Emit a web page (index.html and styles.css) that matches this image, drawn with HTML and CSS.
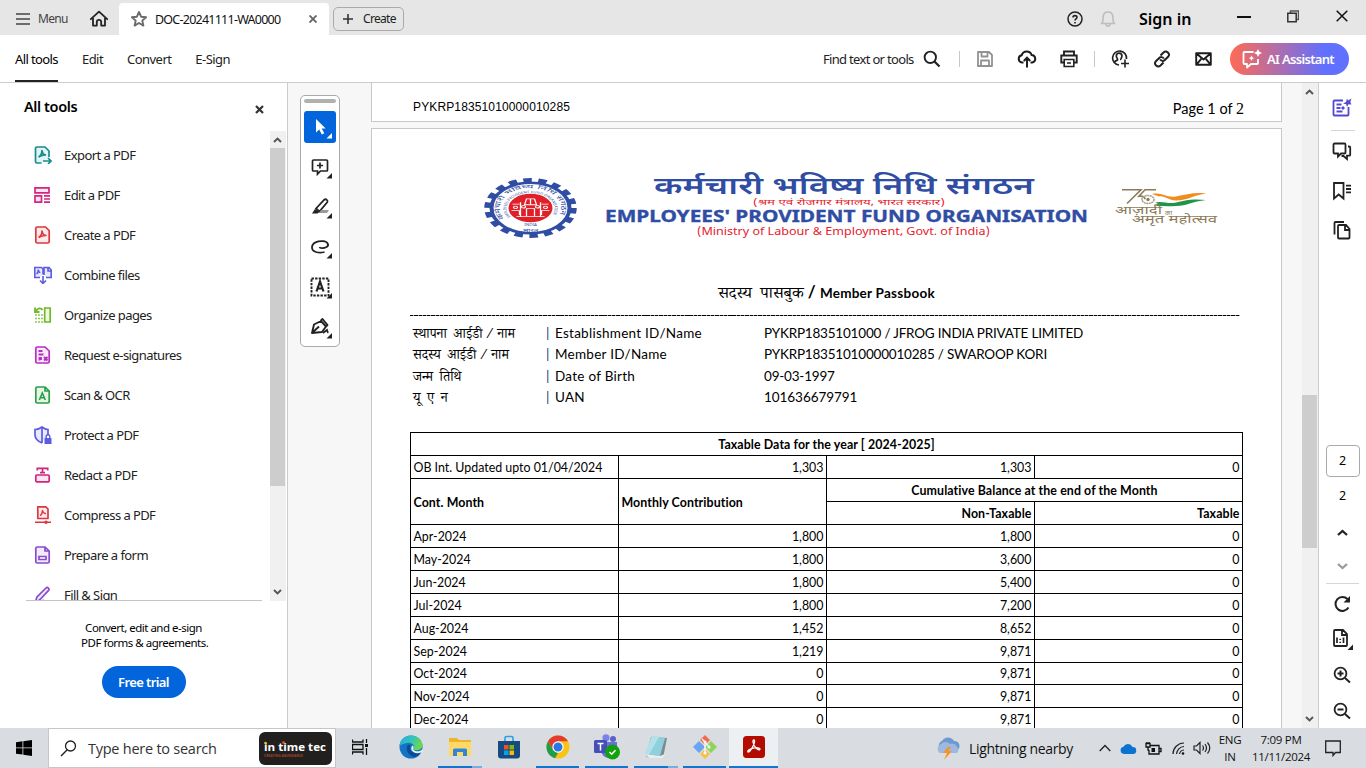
FILE: index.html
```html
<!DOCTYPE html>
<html lang="en">
<head>
<meta charset="utf-8">
<title>DOC-20241111-WA0000</title>
<link rel="stylesheet" href="styles.css">
</head>
<body>
<div class="app">
  <header class="titlebar">
    <div class="menu"><svg class="ic" width="14" height="12" viewBox="0 0 14 12"><path d="M0 1h14M0 6h14M0 11h14" stroke="#444" stroke-width="1.7"/></svg><span>Menu</span></div>
    <svg class="home ic" width="20" height="18" viewBox="0 0 20 18"><path d="M1.8 9.2 10 1.6l8.200 7.600M4 8v7.600h3.800v-3.600a2.200 2.200 0 0 1 4.400 0v3.600H16V8" stroke="#222" stroke-width="1.8" stroke-linejoin="round" stroke-linecap="round"/></svg>
    <div class="tab">
      <svg class="ic" width="18" height="18" viewBox="0 0 18 18"><path d="m9 2 2.100 4.700 5 .5-3.800 3.400 1.100 5L9 13l-4.400 2.600 1.100-5L1.900 7.200l5-.5z" stroke="#6a6a6a" stroke-width="1.900" stroke-linejoin="round"/></svg>
      <span class="tab-name">DOC-20241111-WA0000</span>
      <svg class="ic tab-x" width="8" height="8" viewBox="0 0 8 8"><path d="m.5.5 7 7m0-7-7 7" stroke="#666" stroke-width="1.900"/></svg>
    </div>
    <div class="create"><svg class="ic" width="10" height="10" viewBox="0 0 10 10"><path d="M5 0v10M0 5h10" stroke="#333" stroke-width="1.600"/></svg><span>Create</span></div>
    <div class="window-tools">
      <svg class="ic" width="16" height="16" viewBox="0 0 16 16"><circle cx="8" cy="8" r="7" stroke="#222" stroke-width="1.500"/><path d="M6 6.500c0-2.600 4-2.400 4-.2 0 1.500-2 1.600-2 3.200M8 11v1.400" stroke="#222" stroke-width="1.600"/></svg>
      <svg class="ic bell" width="16" height="18" viewBox="0 0 16 18"><path d="M1.500 13.500C3.500 11.500 3 9 3.200 6.500 3.500 3.500 5.400 2 8 2s4.500 1.500 4.800 4.500c.2 2.500-.3 5 1.700 7zM6 14c.3 3 3.700 3 4 0" stroke="#bdbdbd" stroke-width="1.600" stroke-linejoin="round"/></svg>
      <span class="sign">Sign in</span>
      <svg class="ic min" width="14" height="2" viewBox="0 0 14 2"><path d="M0 1h14" stroke="#111" stroke-width="2"/></svg>
      <svg class="ic max" width="12" height="13" viewBox="0 0 12 13"><path d="M3.500 3V1h8v8.500H9.500" stroke="#555" stroke-width="1.500"/><path d="M.8 3.300h8.400v8.400H.8z" stroke="#333" stroke-width="1.500"/></svg>
      <svg class="ic close" width="12" height="12" viewBox="0 0 12 12"><path d="m.7.7 10.600 10.600m0-10.600L.7 11.300" stroke="#111" stroke-width="1.500"/></svg>
    </div>
  </header>

  <nav class="toolbar">
    <span class="nav-item active">All tools</span><span class="nav-item">Edit</span><span class="nav-item convert">Convert</span><span class="nav-item esign">E-Sign</span>
    <div class="actions">
      <span class="find">Find text or tools</span>
      <svg class="ic search" width="18" height="18" viewBox="0 0 18 18"><circle cx="7.300" cy="7.300" r="5.700" stroke="#222" stroke-width="1.900"/><path d="m11.500 11.500 5 5" stroke="#222" stroke-width="2.200"/></svg>
      <i class="sep s1"></i>
      <svg class="ic save" width="16" height="16" viewBox="0 0 16 16"><path d="M1 1h11l3 3v11H1zM4.500 1.500v4h6v-4M4 15V9.500h8V15" stroke="#929292" stroke-width="1.800" stroke-linejoin="round"/></svg>
      <svg class="ic cloud" width="20" height="18" viewBox="0 0 20 18"><path d="M6.500 12.500H5A3.700 3.700 0 0 1 4.700 5.200 5.200 5.200 0 0 1 14.600 5a3.800 3.800 0 0 1 .7 7.500h-1.800M10 17.500V8m-3.200 3L10 7.700l3.200 3.300" stroke="#1d1d1d" stroke-width="2"/></svg>
      <svg class="ic print" width="18" height="18" viewBox="0 0 18 18"><path d="M4 5V1.500h10V5M4 12.500H1.300V5.500h15.400v7H14" stroke="#222" stroke-width="1.900"/><path d="M4.200 9.500h9.600v7H4.200zM7 13h4" stroke="#222" stroke-width="1.600"/></svg>
      <i class="sep s2"></i>
      <svg class="ic user" width="19" height="19" viewBox="0 0 19 19"><path d="M8 16a7 7 0 1 1 7.500-6M3.500 13.500c.5-2 2.300-2 3-2.500.8-.8-1.200-2-1.200-4 0-1.800 1.200-2.800 2.700-2.800S10.900 5.200 10.900 7c0 2-1.700 3.200-1 4" stroke="#222" stroke-width="1.700"/><path d="M14 10.500v8M10 14.500h8" stroke="#222" stroke-width="1.600"/></svg>
      <svg class="ic link" width="18" height="18" viewBox="0 0 18 18"><path d="m7.500 5.500 3-3c3-2.700 7.200 1.300 4.600 4.300l-3.300 3.200c-1.600 1.500-3.800 1-4.600-.6M10.500 12.500l-3 3c-3 2.700-7.200-1.300-4.600-4.300l3.300-3.200c1.600-1.500 3.800-1 4.600.6" stroke="#222" stroke-width="2"/></svg>
      <svg class="ic mail" width="17" height="14" viewBox="0 0 17 14"><path d="M1.200 1.200h14.600v11.600H1.200zl7.300 6.300 7.300-6.300M1.200 12.800l5-6m9.600 6-5-6" stroke="#1d1d1d" stroke-width="1.900" stroke-linejoin="round"/></svg>
      <div class="ai"><svg class="ic" width="20" height="20" viewBox="0 0 20 20"><path d="M11.500 3H2.500a1 1 0 0 0-1 1v10a1 1 0 0 0 1 1H5v3.500L9 15h6a1 1 0 0 0 1-1v-4" stroke="#fff" stroke-width="1.800" stroke-linejoin="round"/><path d="m16 0 1.200 2.600L20 4l-2.600 1.200L16 8l-1.300-2.800L12 4l2.700-1.400zM9.500 6.500l.9 1.800 1.800.9-1.800.9-.9 1.800-.9-1.800-1.800-.9 1.800-.9z" fill="#fff"/></svg><span>AI Assistant</span></div>
    </div>
  </nav>

  <main class="workspace">
    <aside class="sidebar">
      <div class="side-head"><h2>All tools</h2><svg class="ic" width="9" height="9" viewBox="0 0 9 9"><path d="m1 1 7 7m0-7L1 8" stroke="#333" stroke-width="2.200"/></svg></div>
      <div class="side-body">
        <ul class="tools">
          <li><svg class="ic" width="18" height="18" viewBox="0 0 18 18"><path d="M7.500 17H3a1.500 1.500 0 0 1-1.500-1.500v-13A1.500 1.500 0 0 1 3 1h8l4 4v6" fill="#e2f3f3" stroke="#1a8a8d" stroke-width="1.700"/><path d="M4.500 11c2-1 3.500-3.500 3.500-7 .3 3.500 2 5 4 5-2.500-.2-5 .5-7.500 2M9 15h7.500m-2.500-3 3 3-3 3" stroke="#1a8a8d" stroke-width="1.700"/></svg><span>Export a PDF</span></li>
          <li><svg class="ic" width="18" height="18" viewBox="0 0 18 18"><path d="M1 1.800h14v5H1zM1 9.800h6.500v6.400H1z" fill="#fde6f2" stroke="#d4257f" stroke-width="1.700"/><path d="M10 9.800h6M10 13h6M10 16.200h6" stroke="#d4257f" stroke-width="1.700"/></svg><span>Edit a PDF</span></li>
          <li><svg class="ic" width="18" height="18" viewBox="0 0 18 18"><path d="M11.500 1H3.300A1.500 1.500 0 0 0 1.800 2.500v13A1.500 1.500 0 0 0 3.300 17h10.400a1.500 1.500 0 0 0 1.500-1.500v-11z" fill="#fde9e9" stroke="#dc3740" stroke-width="1.700"/><path d="M4.500 11.500C6.500 10.500 8 8 8 4.500c.3 3.500 2 5 4.500 5-2.500-.2-5.500.5-8 2" stroke="#dc3740" stroke-width="1.600"/></svg><span>Create a PDF</span></li>
          <li><svg class="ic" width="18" height="18" viewBox="0 0 18 18"><path d="M6 11.500H.8v-10h6.700L9 3v5.500M10 9V1.500h5L17.200 4v7.500H12M14 1.500V5h3" fill="#e9e9fd" stroke="#5c5ce0" stroke-width="1.600"/><path d="M2.500 8C4 7 4.300 5 4.300 3.500c.2 2 .8 3 2 3M9 10v7.500m-3-3 3 3 3-3" stroke="#5c5ce0" stroke-width="1.600"/></svg><span>Combine files</span></li>
          <li><svg class="ic" width="18" height="18" viewBox="0 0 18 18"><path d="M10.700 2h5.500v14h-5.500z" fill="#effbe2" stroke="#72b829" stroke-width="1.700"/><path d="M2 5c1.500-3 5-3.500 6.500-1M1 1.500V6h4.500" stroke="#72b829" stroke-width="1.800"/><path d="M1 9h8M1 12.500h8M1 16h8" stroke="#8aca50" stroke-width="1.600" stroke-dasharray="2 1"/></svg><span>Organize pages</span></li>
          <li><svg class="ic" width="18" height="18" viewBox="0 0 18 18"><path d="M11 1H3.300A1.500 1.500 0 0 0 1.800 2.500v13A1.500 1.500 0 0 0 3.300 17h10.400a1.500 1.500 0 0 0 1.500-1.500V5z" fill="#fae8fb" stroke="#b72fc0" stroke-width="1.700"/><path d="M4.500 5h4M4.500 8.500h5M5.500 11v3.500m1.500-3.500v3M10 11l3.500 3.500m0-3.500L10 14.500" stroke="#b72fc0" stroke-width="1.800"/></svg><span>Request e-signatures</span></li>
          <li><svg class="ic" width="18" height="18" viewBox="0 0 18 18"><path d="M11 1H3.300A1.500 1.500 0 0 0 1.800 2.500v13A1.500 1.500 0 0 0 3.300 17h10.400a1.500 1.500 0 0 0 1.500-1.500V5zv4h4" fill="#e5f6e9" stroke="#2c9e45" stroke-width="1.700"/><path d="m5.300 14 3-7 3 7M6.300 11.800h4" stroke="#2c9e45" stroke-width="1.600"/></svg><span>Scan &amp; OCR</span></li>
          <li><svg class="ic" width="18" height="18" viewBox="0 0 18 18"><path d="M8 17C3.500 15 1 12.500 1 9V3.500C4 3.500 6 2.500 8 1c2 1.500 4 2.500 6 2.500V9" fill="#e9e9fd" stroke="#5c5ce0" stroke-width="1.700"/><path d="M8 1v16" stroke="#5c5ce0" stroke-width="1.700"/><path d="M10.500 12h7v6h-7z" fill="#5c5ce0"/><path d="M12.200 12.500v-2a1.800 1.800 0 0 1 3.600 0v2" stroke="#5c5ce0" stroke-width="1.400"/></svg><span>Protect a PDF</span></li>
          <li><svg class="ic" width="18" height="18" viewBox="0 0 18 18"><path d="M3.300 4.500V2.300h10.400v2.200M8.500 2v5M6 6.700h5" stroke="#d0247e" stroke-width="1.700"/><rect x="1.800" y="9" width="13.400" height="6.800" rx="1" fill="#fde6f2" stroke="#d0247e" stroke-width="1.700"/></svg><span>Redact a PDF</span></li>
          <li><svg class="ic" width="18" height="18" viewBox="0 0 18 18"><path d="M3.800.8h8L14 3v9.500H3.800z" fill="#fde9e9" stroke="#dc3740" stroke-width="1.700" stroke-linejoin="round"/><path d="M6 9.500C8 8.500 8.500 6 8.500 4c.3 2.500 1.500 3.500 3.500 3.500M1 16.300h16" stroke="#dc3740" stroke-width="1.500"/><circle cx="12" cy="16.300" r="1.700" fill="#dc3740"/></svg><span>Compress a PDF</span></li>
          <li><svg class="ic" width="18" height="18" viewBox="0 0 18 18"><path d="M11 1H3.300A1.500 1.500 0 0 0 1.800 2.500v13A1.500 1.500 0 0 0 3.300 17h10.400a1.500 1.500 0 0 0 1.500-1.500V5zv4h4M5 10.500h7v3H5z" fill="#f2eafc" stroke="#864ccc" stroke-width="1.700"/></svg><span>Prepare a form</span></li>
          <li><svg class="ic" width="18" height="18" viewBox="0 0 18 18"><path d="M1 17 3 11 12 2c1.500-1.500 4 .8 2.600 2.400L6 13.500 1 17zM7 17c2-4 3-3 3 0" fill="#f2eafc" stroke="#864ccc" stroke-width="1.700"/></svg><span>Fill &amp; Sign</span></li>
        </ul>
        <div class="scroll side-scroll"><svg class="ic" width="9" height="6" viewBox="0 0 9 6"><path d="m1 5 3.500-3.500L8 5" stroke="#555" stroke-width="1.900"/></svg><i class="thumb"></i><svg class="ic down" width="9" height="6" viewBox="0 0 9 6"><path d="m1 1 3.500 3.500L8 1" stroke="#555" stroke-width="1.900"/></svg></div>
      </div>
      <div class="promo"><p>Convert, edit and e-sign<br>&nbsp;PDF forms &amp; agreements.</p><button>Free trial</button></div>
    </aside>

    <section class="canvas">
      <div class="palette">
        <i class="grip"></i>
        <div class="pbtn on"><svg class="ic" width="32" height="32" viewBox="0 0 32 32"><path d="M12 8v13.500l3.200-3 2.600 5 2.500-1.200-2.600-4.800h4z" fill="#fff"/><path d="M28 22v5.500h-5.500z" fill="#fff"/></svg></div>
        <div class="pbtn"><svg class="ic" width="32" height="32" viewBox="0 0 32 32"><path d="M9.500 9h13a1 1 0 0 1 1 1v9a1 1 0 0 1-1 1h-6l-3 3.200V20h-4a1 1 0 0 1-1-1v-9a1 1 0 0 1 1-1zM16 11.500v6M13 14.500h6" stroke="#222" stroke-width="1.700"/><path d="M28 22v5.500h-5.500z" fill="#222"/></svg></div>
        <div class="pbtn"><svg class="ic" width="32" height="32" viewBox="0 0 32 32"><path d="m12 17.500 8.300-8.800c1.500-1.300 4.200.9 2.900 2.600L15.500 20.500z" stroke="#222" stroke-width="1.800"/><path d="m11 18 4.500 3-2 1.500H8z" fill="#222"/><path d="M17 19h8l-2 3h-8z" fill="#999"/><path d="M28 22v5.500h-5.500z" fill="#222"/></svg></div>
        <div class="pbtn"><svg class="ic" width="32" height="32" viewBox="0 0 32 32"><path d="M20.500 21c-6 1.500-12.500 0-12.500-4.500C8 11.500 14 9.800 19 10.200c5 .4 6.500 4 3.500 5.800-2.500 1.300-6.500 1.800-7 0" stroke="#222" stroke-width="1.800"/><path d="M28 22v5.500h-5.500z" fill="#222"/></svg></div>
        <div class="pbtn"><svg class="ic" width="32" height="32" viewBox="0 0 32 32"><path d="M7.500 7.500h17v17h-17z" stroke="#222" stroke-width="1.900" stroke-dasharray="2.400 1.200"/><path d="m12.500 20.500 3.500-10 3.500 10m-6-3h5" stroke="#222" stroke-width="2.200"/><path d="M28 22v5.500h-5.500z" fill="#222"/></svg></div>
        <div class="pbtn"><svg class="ic" width="32" height="32" viewBox="0 0 32 32"><path d="m8 22 2-8.500 7-3.500 5 5.500-4 5.500zM16.500 10l2-2 5 6-2 2M8.500 21.500l6.500-6" stroke="#222" stroke-width="1.900" stroke-linejoin="round"/><path d="m19 22 4-3 1 3" stroke="#222" stroke-width="1.700"/><path d="M28 22v5.500h-5.500z" fill="#222"/></svg></div>
      </div>

      <div class="pages">
        <div class="page page-prev"><span class="doc-id">PYKRP18351010000010285</span><span class="page-no">Page 1 of <b>2</b></span></div>
        <div class="page page-main">
          <svg class="banner" width="832" height="72" viewBox="410 169 832 72">
            <g transform="translate(530.500 208) scale(1 .647)">
              <circle r="42.500" fill="none" stroke="#2f4da3" stroke-width="7.500" stroke-dasharray="8.400 6.434"/>
              <circle r="39" fill="none" stroke="#2f4da3" stroke-width="4"/>
              <path id="ring-top" d="M-26 16A30.500 30.500 0 1 1 26 16" fill="none"/>
              <path id="ring-mid" d="M-20 14A24 24 0 1 1 20 14" fill="none"/>
              <text class="ring-hi"><textPath href="#ring-top" textLength="122" lengthAdjust="spacingAndGlyphs">कर्मचारी भविष्य निधि संगठन</textPath></text>
              <text class="ring-en"><textPath href="#ring-mid" textLength="98" lengthAdjust="spacingAndGlyphs">EMPLOYEES PROVIDENT FUND ORGANISATION</textPath></text>
              <circle r="22" fill="#e02028"/>
              <g fill="none" stroke="#fff" stroke-width="1.300"><path d="M-18 -6h7M18 -6h-7M-19 4h8v7M19 4h-8v7M-10 -9V14M10 -9V14M-4 13V1h8v12M-14 13h28M-4 -14h8l2 9h-12zM0 -14v9"/><circle cx="-7" cy="-2" r="2"/><circle cx="7" cy="-2" r="2"/><circle cx="-15" cy="-1" r="2"/><circle cx="15" cy="-1" r="2"/></g>
              <text class="ring-hi" x="0" y="36.500" text-anchor="middle">भारत</text>
              <text class="ring-en" x="0" y="28" text-anchor="middle">INDIA</text>
            </g>
            <text class="title-hi" x="654" y="194" textLength="380" lengthAdjust="spacingAndGlyphs">कर्मचारी भविष्य निधि संगठन</text>
            <text class="sub-hi" x="753" y="205" textLength="192" lengthAdjust="spacingAndGlyphs">(श्रम एवं रोजगार मंत्रालय, भारत सरकार)</text>
            <text class="title-en" x="605" y="222" textLength="483" lengthAdjust="spacingAndGlyphs">EMPLOYEES' PROVIDENT FUND ORGANISATION</text>
            <text class="sub-en" x="697" y="235" textLength="293" lengthAdjust="spacingAndGlyphs">(Ministry of Labour &amp; Employment, Govt. of India)</text>
            <path d="M1122 189.700h19l-14 13.800M1156 189.700h-11l-6 6.500c4-.5 6 1 6 3" fill="none" stroke="#8b7b58" stroke-width="1.600"/>
            <ellipse cx="1148" cy="199.500" rx="6" ry="4" fill="none" stroke="#aaa08a" stroke-width="1.600" stroke-dasharray="2 .5"/><circle cx="1148" cy="199.500" r="1.700" fill="#8b7b58"/>
            <path d="M1152 194c10-2 14 4 24 2.500s18-4.500 30-3c-12 1.500-18 7-30 7-8 0-11-5-17-4z" fill="#f28c1e"/>
            <path d="M1155 202.500c8-2 13 2 21 0s16-4 30-2.500c-14 1.500-19 6-30 6-8 .5-14 0-21 0 3-1 4-2 0-3.500z" fill="#1f9547"/>
            <text class="amrit" x="1115" y="214" textLength="47" lengthAdjust="spacingAndGlyphs">आज़ादी</text><text class="amrit small" x="1165" y="214.500">का</text>
            <text class="amrit" x="1132" y="223" textLength="85" lengthAdjust="spacingAndGlyphs">अमृत महोत्सव</text>
          </svg>
          <h1 class="passbook"><span class="hi">सदस्य पासबुक</span><span class="slash">/</span><span>Member Passbook</span></h1>
          <div class="rule"></div>
          <dl class="info">
            <dt class="hi">स्थापना आईडी ⁄ नाम</dt><dd class="bar">|</dd><dd class="label">Establishment ID/Name</dd><dd class="val">PYKRP1835101000 / JFROG INDIA PRIVATE LIMITED</dd>
            <dt class="hi">सदस्य आईडी ⁄ नाम</dt><dd class="bar">|</dd><dd class="label">Member ID/Name</dd><dd class="val">PYKRP18351010000010285 / SWAROOP KORI</dd>
            <dt class="hi">जन्म तिथि</dt><dd class="bar">|</dd><dd class="label">Date of Birth</dd><dd class="val">09-03-1997</dd>
            <dt class="hi">यू ए न</dt><dd class="bar">|</dd><dd class="label">UAN</dd><dd class="val">101636679791</dd>
          </dl>
          <table class="ledger">
            <colgroup><col><col><col><col></colgroup>
            <tr><th colspan="4" class="c">Taxable Data for the year [ 2024-2025]</th></tr>
            <tr><td>OB Int. Updated upto 01/04/2024</td><td>1,303</td><td>1,303</td><td>0</td></tr>
            <tr><th rowspan="2" class="tall">Cont. Month</th><th rowspan="2" class="tall">Monthly Contribution</th><th colspan="2" class="c">Cumulative Balance at the end of the Month</th></tr>
            <tr><th class="r">Non-Taxable</th><th class="r">Taxable</th></tr>
            <tr><td>Apr-2024</td><td>1,800</td><td>1,800</td><td>0</td></tr>
            <tr><td>May-2024</td><td>1,800</td><td>3,600</td><td>0</td></tr>
            <tr><td>Jun-2024</td><td>1,800</td><td>5,400</td><td>0</td></tr>
            <tr><td>Jul-2024</td><td>1,800</td><td>7,200</td><td>0</td></tr>
            <tr><td>Aug-2024</td><td>1,452</td><td>8,652</td><td>0</td></tr>
            <tr><td>Sep-2024</td><td>1,219</td><td>9,871</td><td>0</td></tr>
            <tr class="short"><td>Oct-2024</td><td>0</td><td>9,871</td><td>0</td></tr>
            <tr><td>Nov-2024</td><td>0</td><td>9,871</td><td>0</td></tr>
            <tr><td>Dec-2024</td><td>0</td><td>9,871</td><td>0</td></tr>
            <tr><td></td><td></td><td></td><td></td></tr>
          </table>
        </div>
      </div>
      <div class="scroll doc-scroll"><svg class="ic" width="9" height="6" viewBox="0 0 9 6"><path d="m1 5 3.500-3.500L8 5" stroke="#555" stroke-width="1.900"/></svg><i class="thumb"></i><svg class="ic down" width="9" height="6" viewBox="0 0 9 6"><path d="m1 1 3.500 3.500L8 1" stroke="#555" stroke-width="1.900"/></svg></div>
    </section>

    <aside class="rail">
      <svg class="ic" width="20" height="20" viewBox="0 0 20 20"><path d="M11 2.500H2.500a1 1 0 0 0-1 1v13a1 1 0 0 0 1 1h13a1 1 0 0 0 1-1V9M4.500 6.500h5M4.500 10h4M4.500 13.500h6" stroke="#5548d0" stroke-width="1.800"/><path d="m15 .5 1 2 3.500-2-1.200 3.500 1.200 2.500-3-.3L15 9l-.8-2.800-3.200-.7L14 4zM11 8l2 2-2 2-2-2z" fill="#5548d0"/></svg>
      <i class="rail-line first"></i>
      <svg class="ic r2" width="20" height="20" viewBox="0 0 20 20"><path d="M2.500 2.500h10a1 1 0 0 1 1 1v8a1 1 0 0 1-1 1H9L6 15.500v-3H2.500a1 1 0 0 1-1-1v-8a1 1 0 0 1 1-1zM16 5.500h1.200a1 1 0 0 1 1 1v7.200a1 1 0 0 1-1 1H15V18l-3.500-3H9.500" stroke="#222" stroke-width="1.800"/></svg>
      <svg class="ic r3" width="20" height="20" viewBox="0 0 20 20"><path d="M2 2h9.500v15.500L6.700 13.500 2 17.500zM14 4.700h5M14 8h5M14 11.300h5" stroke="#222" stroke-width="1.800"/></svg>
      <svg class="ic r4" width="20" height="20" viewBox="0 0 20 20"><path d="M2.500 14.500V3a1 1 0 0 1 1-1H12M7 5h7l3.500 4v8.500a1 1 0 0 1-1 1H7a1 1 0 0 1-1-1V6a1 1 0 0 1 1-1zM13 5v5h4.500" stroke="#222" stroke-width="1.800"/></svg>
      <div class="page-box">2</div>
      <span class="page-total">2</span>
      <svg class="ic r5" width="11" height="7" viewBox="0 0 11 7"><path d="m1 6 4.500-4L10 6" stroke="#222" stroke-width="2.300"/></svg>
      <svg class="ic r6" width="11" height="7" viewBox="0 0 11 7"><path d="m1 1 4.500 4L10 1" stroke="#999" stroke-width="2.300"/></svg>
      <i class="rail-line second"></i>
      <svg class="ic r7" width="18" height="18" viewBox="0 0 18 18"><path d="M15.500 12.500A7 7 0 1 1 14.500 4" stroke="#222" stroke-width="2"/><path d="M17 1v6.500h-6.500z" fill="#222"/></svg>
      <svg class="ic r8" width="26" height="22" viewBox="0 0 26 22"><path d="M14 2H6a1 1 0 0 0-1 1v14a1 1 0 0 0 1 1h11a1 1 0 0 0 1-1V6zM13 2.500V7h5" stroke="#222" stroke-width="1.800"/><path d="M8 9.500V15m6.500-5.500V15m-3.300-4.300V12m0 1.800V15" stroke="#222" stroke-width="1.700"/><path d="M24 16.500V22h-5.500z" fill="#222"/></svg>
      <svg class="ic r9" width="18" height="18" viewBox="0 0 18 18"><circle cx="7.500" cy="7.500" r="5.900" stroke="#222" stroke-width="1.800"/><path d="m12 12 5 4.500M4.500 7.500h6M7.500 4.500v6" stroke="#222" stroke-width="2"/></svg>
      <svg class="ic r10" width="18" height="18" viewBox="0 0 18 18"><circle cx="7.500" cy="7.500" r="5.900" stroke="#222" stroke-width="1.800"/><path d="m12 12 5 4.500M4.500 7.500h6" stroke="#222" stroke-width="2"/></svg>
    </aside>
  </main>

  <footer class="taskbar">
    <div class="start"><svg width="16" height="16" viewBox="0 0 16 16"><path d="M0 2.300 6.500 1.300v6.200H0zM7.300 1.200 16 0v7.500H7.300zM0 8.300h6.500v6.300L0 13.700zM7.300 8.300H16V16l-8.700-1.200z"/></svg></div>
    <div class="tsearch">
      <svg class="ic" width="17" height="17" viewBox="0 0 17 17"><circle cx="10.500" cy="6" r="5" stroke="#222" stroke-width="1.300"/><path d="M7 10 1 16" stroke="#222" stroke-width="1.400"/></svg>
      <span>Type here to search</span>
      <svg class="intime" width="73" height="33" viewBox="0 0 73 33"><rect width="73" height="33" rx="6" fill="#22201f"/><text x="5" y="19" textLength="62" lengthAdjust="spacingAndGlyphs" fill="#fff">in time tec</text><text class="creating" x="5" y="25" textLength="39" lengthAdjust="spacingAndGlyphs">CREATING ABUNDANCE</text><circle cx="6.500" cy="11" r="1.300" fill="#f3c21b"/><circle cx="24.500" cy="10.500" r="1.300" fill="#f0592b"/></svg>
    </div>
    <div class="apps">
      <div class="app-ic bare view"><svg class="ic" width="17" height="16" viewBox="0 0 17 16"><path d="M.5.500v2.500H11V.500M.5 15.500V13H11v2.500M.5 5.500H11v5H.5zM14.500 0v4M14.500 9v7" stroke="#111" stroke-width="1.300"/><path d="M13 5h3v3h-3z" fill="#111"/></svg></div>
      <div class="app-ic bare"><svg width="24" height="24" viewBox="0 0 24 24"><defs><linearGradient id="edge" x1="0" y1="0" x2="1" y2=".4"><stop stop-color="#2aa7e4"/><stop offset=".6" stop-color="#35c6b4"/><stop offset="1" stop-color="#6bd94f"/></linearGradient></defs><circle cx="12" cy="12" r="11.500" fill="#1573c6"/><path d="M.5 11C1 4.500 6 .5 12 .5c7 0 11.500 5 11.500 9.500 0 5-6 6.500-9.500 4.500 3-3-.5-7.500-6-6.500-3.500.500-6 1.500-7.500 3z" fill="url(#edge)"/><path d="M8 11c-1.500 6 3 10.500 8 11 3-.700 5-3 6-5-6 2.500-11 0-11-4.500 0-2 1-2.500 1-2.500-2-.5-3.500 0-4 1z" fill="#0c4c95"/><path d="M14 14.500c3 3 7.500 2 9.500-.5v3l-1.500.5c-4 1.500-8 .5-9.500-2.500-.5-2 0-3.500 1-4.500 1.300.8 1.700 2.500.5 4z" fill="#e4f2fb"/></svg></div>
      <div class="app-ic split"><svg width="22" height="20" viewBox="0 0 22 20"><path d="M0 1h8l2 2h12v16H0z" fill="#f0b42b"/><path d="M0 5h22v14H0z" fill="#ffd968"/><path d="M4 19v-6a1.500 1.500 0 0 1 1.500-1.500h11A1.500 1.500 0 0 1 18 13v6h-4v-4H8v4z" fill="#2f86d6"/></svg></div>
      <div class="app-ic bare"><svg width="22" height="24" viewBox="0 0 22 24"><path d="M7 6V3a1.500 1.500 0 0 1 1.500-1.500h5A1.500 1.500 0 0 1 15 3v3" fill="none" stroke="#2b9fe6" stroke-width="1.600"/><path d="M0 6h22v14.500a3 3 0 0 1-3 3H3a3 3 0 0 1-3-3z" fill="#174a80"/><path d="M6 10h4.500v4.500H6z" fill="#f25022"/><path d="M11.500 10H16v4.500h-4.500z" fill="#7fba00"/><path d="M6 15.500h4.500V20H6z" fill="#00a4ef"/><path d="M11.500 15.500H16V20h-4.500z" fill="#ffb900"/></svg></div>
      <div class="app-ic"><svg width="24" height="24" viewBox="0 0 24 24"><circle cx="12" cy="12" r="11.500" fill="#fbc316"/><path d="M2 6.300A11.500 11.500 0 0 1 22 6.300H12L7 15z" fill="#e33b2e"/><path d="M2 6.300 7 15l5 3-3 5.200A11.500 11.500 0 0 1 2 6.300z" fill="#1f9d4d"/><circle cx="12" cy="12" r="5.700" fill="#fff"/><circle cx="12" cy="12" r="4.500" fill="#2879e5"/></svg></div>
      <div class="app-ic"><svg width="26" height="26" viewBox="0 0 26 26"><circle cx="19" cy="5" r="3" fill="#5b62c8"/><circle cx="12" cy="3.800" r="3.600" fill="#7b83eb"/><path d="M7 8h16v8a8 8 0 0 1-16 0z" fill="#6a70d8"/><rect y="6" width="13" height="13" rx="1.500" fill="#464eb8"/><path d="M3.500 9.500h6M6.500 9.500v7" stroke="#fff" stroke-width="1.500"/><circle cx="18.500" cy="18" r="7.500" fill="#13a10e"/><path d="m15.500 18 2.200 2.200 3.800-4" fill="none" stroke="#fff" stroke-width="1.500"/></svg></div>
      <div class="app-ic split"><svg width="24" height="24" viewBox="0 0 24 24"><path d="m7 2 16 1-4 20H5l-3-2z" fill="#7d8b90"/><path d="M8 1l13 2-5 18L1 19z" fill="#8fd0dd"/><path d="m8 1 7 1L5 19.500 1 19z" fill="#b4e1e9"/><path d="m1 19 15 2 5-2-2 4H5z" fill="#e8eef0"/></svg></div>
      <div class="app-ic"><svg width="24" height="24" viewBox="0 0 24 24"><path d="m12 0 5 5-5 5-5-5z" fill="#f16d51"/><path d="m6 6 6 6-6 6-6-6z" fill="#6ba4f0"/><path d="m18 6 6 6-6 6-6-6z" fill="#8ed45b"/><path d="m12 14 5 5-5 5-5-5z" fill="#f4c14d"/><path d="m9 4 3 3v12m0-12 4 5" fill="none" stroke="#fff" stroke-width="1.200"/><circle cx="12" cy="7" r="1.500" fill="#fff"/><circle cx="16" cy="12" r="1.500" fill="#fff"/><circle cx="12" cy="18" r="1.500" fill="#fff"/></svg></div>
      <div class="app-ic current"><svg width="22" height="22" viewBox="0 0 22 22"><rect width="22" height="22" rx="3.500" fill="#b30b00"/><path d="M5 16c-1.500-1.500 4-4 7-4.200 4-.3 6 1.200 4.500 2-2 .8-6-4-6.500-7.800-.3-3 2-2.500 1.500 0-.6 3-4 10-6.500 10z" fill="none" stroke="#fff" stroke-width="1.300"/></svg></div>
    </div>
    <div class="tray">
      <svg class="storm" width="25" height="24" viewBox="0 0 25 24"><path d="M6 15a5.500 5.500 0 0 1 0-10 7 7 0 0 1 12 0 5 5 0 0 1 1 10z" fill="#6d99d2"/><path d="M4 17a5 5 0 0 1 1-9 6 6 0 0 1 9 0 5 5 0 0 1 7 3 4 4 0 0 1 0 6z" fill="#9fb8df"/><path d="m12 11-5 6h4l-3 7 8-9h-4l3-4z" fill="#f7931e"/></svg>
      <span class="weather">Lightning nearby</span>
      <svg class="ic t1" width="12" height="8" viewBox="0 0 12 8"><path d="m.7 7 5.300-5.500L11.300 7" stroke="#222" stroke-width="1.300"/></svg>
      <svg class="t2" width="17" height="11" viewBox="0 0 17 11"><path d="M4 11a3.700 3.700 0 0 1-.5-7.300A5 5 0 0 1 12.500 4 3.500 3.500 0 0 1 13 11z" fill="#0a73d0"/></svg>
      <svg class="ic t3" width="17" height="13" viewBox="0 0 17 13"><path d="M5 3.500h9v8.500H4V8M14.500 6.500H16v3h-1.500M1 1.500v3.500h4V1.500zM2 1.500V0m2 1.500V0M3 5v3h1" stroke="#111" stroke-width="1.300"/><path d="M6.500 6H10v4H6.500z" fill="#111"/></svg>
      <svg class="ic t4" width="15" height="14" viewBox="0 0 15 14"><path d="M2 13A11 11 0 0 1 13 2M5.500 13A8 8 0 0 1 13 5.500M8.500 13A5 5 0 0 1 13 9" stroke="#222" stroke-width="1.200"/><circle cx="12" cy="12.500" r="1.300" fill="#111"/></svg>
      <svg class="ic t5" width="18" height="14" viewBox="0 0 18 14"><path d="M1 5h2.500L7 1.500v11L3.500 9H1zM9.500 4.500q2 2.500 0 5M12 3q3 4 0 8M14.500 1.500q4.500 5.500 0 11" stroke="#222" stroke-width="1.200"/></svg>
      <span class="lang">ENG<br>IN</span>
      <span class="clock">7:09 PM<br>11/11/2024</span>
      <svg class="ic t6" width="16" height="17" viewBox="0 0 16 17"><path d="M.7 1h14.600v11.500H10.500L8 15.500v-3H.7z" stroke="#222" stroke-width="1.300"/></svg>
    </div>
  </footer>
</div>
</body>
</html>
```
FILE: styles.css
```css
* { box-sizing: border-box; }
body { margin: 0; font-family: "Noto Sans", "Open Sans", sans-serif; color: #222; }
.app { width: 1366px; height: 768px; display: flex; flex-direction: column; overflow: hidden; background: #fff; }
svg { display: block; flex: none; }
.ic { fill: none; }

/* title bar */
.titlebar { height: 35px; background: #e6e6e6; display: flex; align-items: center; flex: none; padding-top: 2px; }
.menu { display: flex; align-items: center; gap: 8px; width: 89px; padding-left: 16px; font-size: 12px; color: #444; letter-spacing: -.65px; }
.tab { align-self: flex-end; width: 210px; height: 32px; margin-left: 10px; background: #fff; border-radius: 4px 4px 0 0; display: flex; align-items: center; padding: 0 12px 0 11px; font-size: 12.500px; color: #111; }
.tab-name { margin-left: 7px; letter-spacing: -.76px; white-space: nowrap; }
.tab-x { margin-left: auto; }
.create { width: 71px; height: 24px; margin-left: 4px; border: 1px solid #aaa; border-radius: 5px; display: flex; align-items: center; gap: 10px; padding-left: 9px; font-size: 12px; letter-spacing: -.7px; }
.window-tools { margin-left: auto; display: flex; align-items: center; padding-right: 18px; }
.bell { margin-left: 17px; }
.sign { margin-left: 23px; width: 53px; font-size: 16px; font-weight: 600; color: #000; line-height: 20px; white-space: nowrap; }
.min { margin: -4px 0 0 45px; }
.max { margin: -4px 0 0 36px; }
.close { margin: -5px 0 0 37px; }

/* main toolbar */
.toolbar { height: 48px; flex: none; border-bottom: 1px solid #ccc; display: flex; align-items: stretch; padding-left: 15px; font-size: 13px; }
.nav-item { line-height: 48px; letter-spacing: -.55px; margin-right: 24px; white-space: nowrap; }
.nav-item.active { width: 43px; border-bottom: 2px solid #222; color: #000; letter-spacing: -.6px; }
.actions { margin-left: auto; display: flex; align-items: center; padding-right: 17px; }
.find { width: 91px; letter-spacing: -.68px; white-space: nowrap; }
.search { margin-left: 9px; }
.sep { width: 1px; height: 16px; background: #c8c8c8; }
.s1 { margin-left: 18px; }
.save { margin-left: 17px; }
.cloud { margin-left: 24px; }
.print { margin-left: 23px; }
.s2 { margin-left: 16px; }
.user { margin-left: 16px; }
.link { margin-left: 23px; }
.mail { margin-left: 24px; }
.ai { margin-left: 18px; width: 119px; height: 32px; border-radius: 16px; display: flex; align-items: center; gap: 5px; padding-left: 12px; color: #fff; font-size: 13px; font-weight: 600; letter-spacing: -.68px; background: linear-gradient(90deg, #ff6a55, #6170ff 80%); white-space: nowrap; }

/* side panel */
.workspace { height: 645px; flex: none; display: flex; }
.sidebar { width: 288px; border-right: 1px solid #ccc; background: #fff; flex: none; display: flex; flex-direction: column; }
.side-head { height: 48px; display: flex; justify-content: space-between; align-items: center; padding: 0 23px 0 24px; }
.side-head h2 { margin: -2px 0 0; font-size: 14.500px; font-weight: 600; letter-spacing: -.4px; color: #000; }
.side-head svg { margin-top: 4px; }
.side-body { height: 470px; display: flex; justify-content: space-between; overflow: hidden; }
.tools { list-style: none; margin: 0 0 0 26px; padding: 4px 0 0 8px; width: 236px; height: 470px; overflow: hidden; border-bottom: 1px solid #c4c4c4; }
.tools li { height: 40px; display: flex; align-items: center; gap: 12px; font-size: 13px; letter-spacing: -.57px; white-space: nowrap; }
.scroll { width: 16px; background: #f0f0f0; display: flex; flex-direction: column; align-items: center; }
.side-scroll { margin-right: 1px; padding: 6px 1px 6px 0; }
.side-scroll .thumb { margin-top: 5px; height: 338px; }
.thumb { width: 15px; background: #cdcdcd; flex: none; }
.down { margin-top: auto; }
.promo { flex: 1; display: flex; flex-direction: column; align-items: center; padding-top: 19px; font-size: 11.500px; color: #000; letter-spacing: -.5px; }
.promo p { margin: 0; line-height: 15px; text-align: center; white-space: nowrap; }
.promo button { margin-top: 16px; width: 84px; height: 32px; border: 0; padding: 0; border-radius: 16px; background: #0265dc; color: #fff; font: 600 13px "Noto Sans", sans-serif; letter-spacing: -.6px; }

/* document view */
.canvas { flex: 1; background: #f7f7f7; display: flex; overflow: hidden; }
.palette { width: 40px; height: 252px; margin: 12px 0 0 12px; padding: 3px; background: #fff; border: 1px solid #aaa; border-radius: 5px; flex: none; }
.grip { display: block; height: 4px; border-radius: 2px; background: #b1b1b1; margin-bottom: 8px; }
.pbtn { width: 32px; height: 32px; border-radius: 3px; margin-bottom: 8px; }
.pbtn.on { background: #0265dc; }
.pages { width: 911px; margin-left: 31px; flex: none; }
.page { background: #fff; border: 1px solid #c8c8c8; }
.page-prev { height: 39px; border-top: 0; display: flex; justify-content: space-between; padding: 14px 37px 0 41px; color: #000; }
.doc-id { font: 12px/21px "Liberation Sans", sans-serif; letter-spacing: .13px; }
.page-no { font: 14.500px/24px Lato, sans-serif; }
.page-no b { font: 16px "Liberation Serif", serif; }
.page-main { margin-top: 6px; height: 640px; padding: 40px 0 0 38px; font-family: Lato, sans-serif; color: #000; }
.banner text { font-family: "Noto Sans Devanagari", "Noto Sans", sans-serif; }
.banner .title-hi { font-size: 23.500px; font-weight: 600; fill: #2f4da3; }
.banner .sub-hi { font-size: 8px; fill: #e8202a; }
.banner .title-en { font-family: "Noto Sans", sans-serif; font-size: 15.500px; font-weight: 700; fill: #2f4da3; stroke: #2f4da3; stroke-width: .35px; }
.banner .sub-en { font-size: 10.500px; fill: #e8202a; }
.banner .amrit { font-size: 10.500px; fill: #8b7b58; }
.banner .small { font-size: 7px; }
.banner .ring-hi { font-size: 8px; fill: #2f4da3; }
.banner .ring-en { font-size: 4.500px; fill: #2f4da3; }
.hi { font-family: "Noto Serif Devanagari", "Noto Sans Devanagari", "Noto Sans", serif; word-spacing: 3px; }
.passbook { margin: 41px 0 0; width: 833px; display: flex; justify-content: center; align-items: baseline; font-size: 13.500px; font-weight: 700; line-height: 20px; letter-spacing: .25px; white-space: nowrap; }
.passbook .hi { font-weight: 400; font-size: 16.500px; letter-spacing: 0; word-spacing: 4px; }
.passbook .slash { font-size: 17px; margin: 0 4px; }
.rule { width: 830px; height: 1px; margin-top: 9px; background: repeating-linear-gradient(90deg, #000 0 3.300px, #999 3.300px 4.300px); }
.info { margin: 7px 0 0; padding-left: 3px; display: grid; grid-template-columns: 133px 9px 209px 1fr; grid-auto-rows: 21.400px; line-height: 21.400px; font-size: 13.500px; white-space: nowrap; }
.info dt { padding-top: 2px; }
.info dd { margin: 0; }
.info .label { letter-spacing: .26px; }
.info .val { letter-spacing: -.2px; }
.info .val:last-child { letter-spacing: -.05px; }
.info .bar { color: #047; }
.ledger { width: 833px; margin-top: 23px; border-collapse: collapse; table-layout: fixed; font-size: 12.400px; }
.ledger tr { height: 23px; }
.ledger .short { height: 22px; }
.ledger td, .ledger th { border: 1px solid #000; padding: 2px 2.500px 0 2.500px; line-height: 16px; text-align: left; white-space: nowrap; }
.ledger .tall { padding-top: 4px; }
.ledger td + td, .ledger .r { text-align: right; }
.ledger .c { text-align: center; }
.ledger th { letter-spacing: .08px; }
.doc-scroll { margin-left: auto; padding: 6px 1px 6px 0; }
.doc-scroll .thumb { margin-top: 300px; height: 153px; }

/* right rail */
.rail { width: 48px; border-left: 1px solid #ccc; background: #fff; display: flex; flex-direction: column; align-items: center; padding-top: 15px; flex: none; }
.rail > .ic { margin-right: 1px; }
.rail-line { width: 24px; height: 1px; background: #d6d6d6; }
.first { margin-top: 12px; }
.r2 { margin-top: 10px; }
.r3 { margin-top: 20px; }
.r4 { margin-top: 19px; }
.page-box { margin-top: 205px; width: 34px; height: 32px; border: 1px solid #aaa; border-radius: 4px; text-align: center; line-height: 29px; font-size: 12.500px; color: #000; }
.page-total { margin-top: 9px; line-height: 20px; font-size: 12.500px; color: #000; }
.page-box, .page-total { flex: none; }
.r5 { margin-top: 23px; }
.r6 { margin-top: 27px; }
.second { width: 33px; margin-top: 13px; }
.r7 { margin-top: 11px; }
.r8 { margin-top: 15px; }
.r9 { margin-top: 16px; }
.r10 { margin-top: 18px; }

/* task bar */
.taskbar { height: 40px; flex: none; display: flex; background: #d9dde1; font-family: "Open Sans", sans-serif; color: #111; }
.start { width: 48px; display: flex; align-items: center; justify-content: center; }
.tsearch { width: 288px; background: #fff; border: 1px solid #c4c6c8; display: flex; align-items: center; padding: 0 3px 0 11px; font-size: 14.500px; color: #333; letter-spacing: -.25px; }
.tsearch span { margin-left: 11px; white-space: nowrap; }
.intime { margin-left: auto; font: 700 11px "Open Sans", sans-serif; letter-spacing: 0; }
.intime .creating { font-size: 3.500px; fill: #a4432b; }
.apps { display: flex; margin-left: 1px; }
.app-ic { width: 49px; height: 40px; display: flex; align-items: center; justify-content: center; border-image: linear-gradient(90deg, transparent 10%, #0a78d4 10% 90%, transparent 90%) 2; border-width: 0 0 2px; border-style: solid; }
.app-ic.bare { border-image: none; border-color: transparent; }
.app-ic.view { padding-right: 2px; }
.app-ic.split { border-image: linear-gradient(90deg, transparent 10%, #0a78d4 10% 74%, #74afe0 74% 92%, transparent 92%) 2; }
.app-ic.current { background: #edf0f3; border-image: none; border-color: #0a78d4; }
.tray { margin-left: auto; display: flex; align-items: center; font-size: 14px; white-space: nowrap; }
.weather { margin-left: 8px; width: 105px; letter-spacing: -.35px; }
.t1 { margin-left: 25px; }
.t2 { margin-left: 9px; }
.t3 { margin-left: 8px; }
.t4 { margin-left: 9px; }
.t5 { margin-left: 7px; }
.lang, .clock { font-size: 11.500px; line-height: 17px; letter-spacing: -.3px; text-align: center; padding-bottom: 1px; }
.lang { margin-left: 7px; width: 24px; }
.clock { margin-left: 10px; width: 58px; }
.t6 { margin: 0 25px 0 15px; }
```
